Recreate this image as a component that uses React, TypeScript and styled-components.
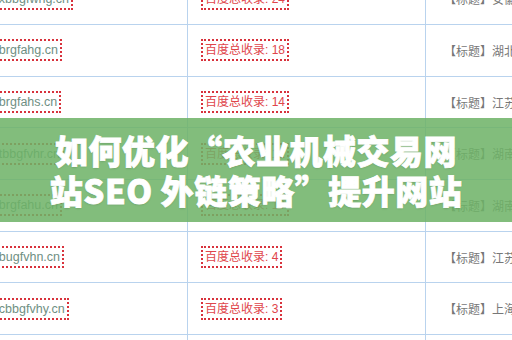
import React from 'react';
import styled, { createGlobalStyle } from 'styled-components';

const GlobalStyle = createGlobalStyle`
  html, body {
    margin: 0;
    padding: 0;
    background: #ffffff;
  }
  body {
    font-family: "Noto Sans", "Noto Sans CJK SC", sans-serif;
  }
`;

interface Row {
    domain: string;
    count: number;
    title: string;
}

const rows: Row[] = [
    { domain: 'www.xbbgfwhg.cn', count: 24, title: '【标题】安徽农业机械交易网' },
    { domain: 'www.brgfahg.cn', count: 18, title: '【标题】湖北农业机械交易网' },
    { domain: 'www.brgfahs.cn', count: 14, title: '【标题】江苏农业机械交易网' },
    { domain: 'www.tbbgfvhr.cn', count: 12, title: '【标题】湖南农业机械交易网' },
    { domain: 'www.brgfahu.cn', count: 10, title: '【标题】湖南农业机械交易网' },
    { domain: 'www.bugfvhn.cn', count: 4, title: '【标题】江苏农业机械交易网' },
    { domain: 'www.cbbgfvhy.cn', count: 3, title: '【标题】上海农业机械交易网' },
    { domain: 'www.bbgfvhz.cn', count: 2, title: '【标题】上海农业机械交易网' },
];

const App: React.FC = () => {
    return (
        <>
            <GlobalStyle />
            <Page>
                <Table>
                    {rows.map((r, i) => (
                        <React.Fragment key={i}>
                            <Cell>
                                <DomainBox>{r.domain}</DomainBox>
                            </Cell>
                            <Cell>
                                <CountBox>百度总收录: {r.count}</CountBox>
                            </Cell>
                            <TitleCell>{r.title}</TitleCell>
                        </React.Fragment>
                    ))}
                </Table>
                <Banner>
                    <BannerTitle>
                        如何优化“农业机械交易网<br />站SEO 外链策略”提升网站
                    </BannerTitle>
                </Banner>
            </Page>
        </>
    );
};

export default App;

const Page = styled.div`
  position: relative;
  width: 512px;
  height: 340px;
  overflow: hidden;
  background: #ffffff;
`;

const Table = styled.div`
  display: grid;
  grid-template-columns: 249px 238px 300px;
  grid-auto-rows: 51.7px;
  margin-left: -61px;
  margin-top: -26.7px;
`;

const Cell = styled.div`
  display: flex;
  align-items: center;
  border-right: 1px solid #b9d3ee;
  border-bottom: 1px solid #b9d3ee;
  padding-left: 13px;
  box-sizing: border-box;
  overflow: hidden;
`;

const TitleCell = styled(Cell)`
  padding-left: 18px;
  border-right: none;
  font-size: 12px;
  color: #777777;
  white-space: nowrap;
  font-family: "Noto Sans CJK SC", sans-serif;
`;

const DotBox = styled.span`
  display: inline-block;
  border: 2px dotted #d8323c;
  padding: 0 2px;
  height: 22px;
  line-height: 18px;
  box-sizing: border-box;
  white-space: nowrap;
`;

const DomainBox = styled(DotBox)`
  color: #6f8f83;
  margin-left: 13px;
  font-family: "Liberation Sans", Arial, sans-serif;
  font-size: 12.5px;
`;

const CountBox = styled(DotBox)`
  color: #e0454b;
  font-family: "Liberation Sans", "Noto Sans CJK SC", sans-serif;
  font-size: 12px;
`;

const Banner = styled.div`
  position: absolute;
  left: 0;
  right: 0;
  top: 118px;
  height: 104px;
  background: rgba(110, 178, 102, 0.86);
  display: flex;
  align-items: center;
  justify-content: center;
`;

const BannerTitle = styled.div`
  color: #ffffff;
  font-family: "Noto Sans CJK SC", "Noto Sans", sans-serif;
  font-weight: 900;
  font-size: 33px;
  line-height: 40px;
  text-align: center;
  letter-spacing: 0.5px;
  -webkit-text-stroke: 0.8px #ffffff;
  text-shadow: 0 1px 2px rgba(0, 0, 0, 0.15);
`;
